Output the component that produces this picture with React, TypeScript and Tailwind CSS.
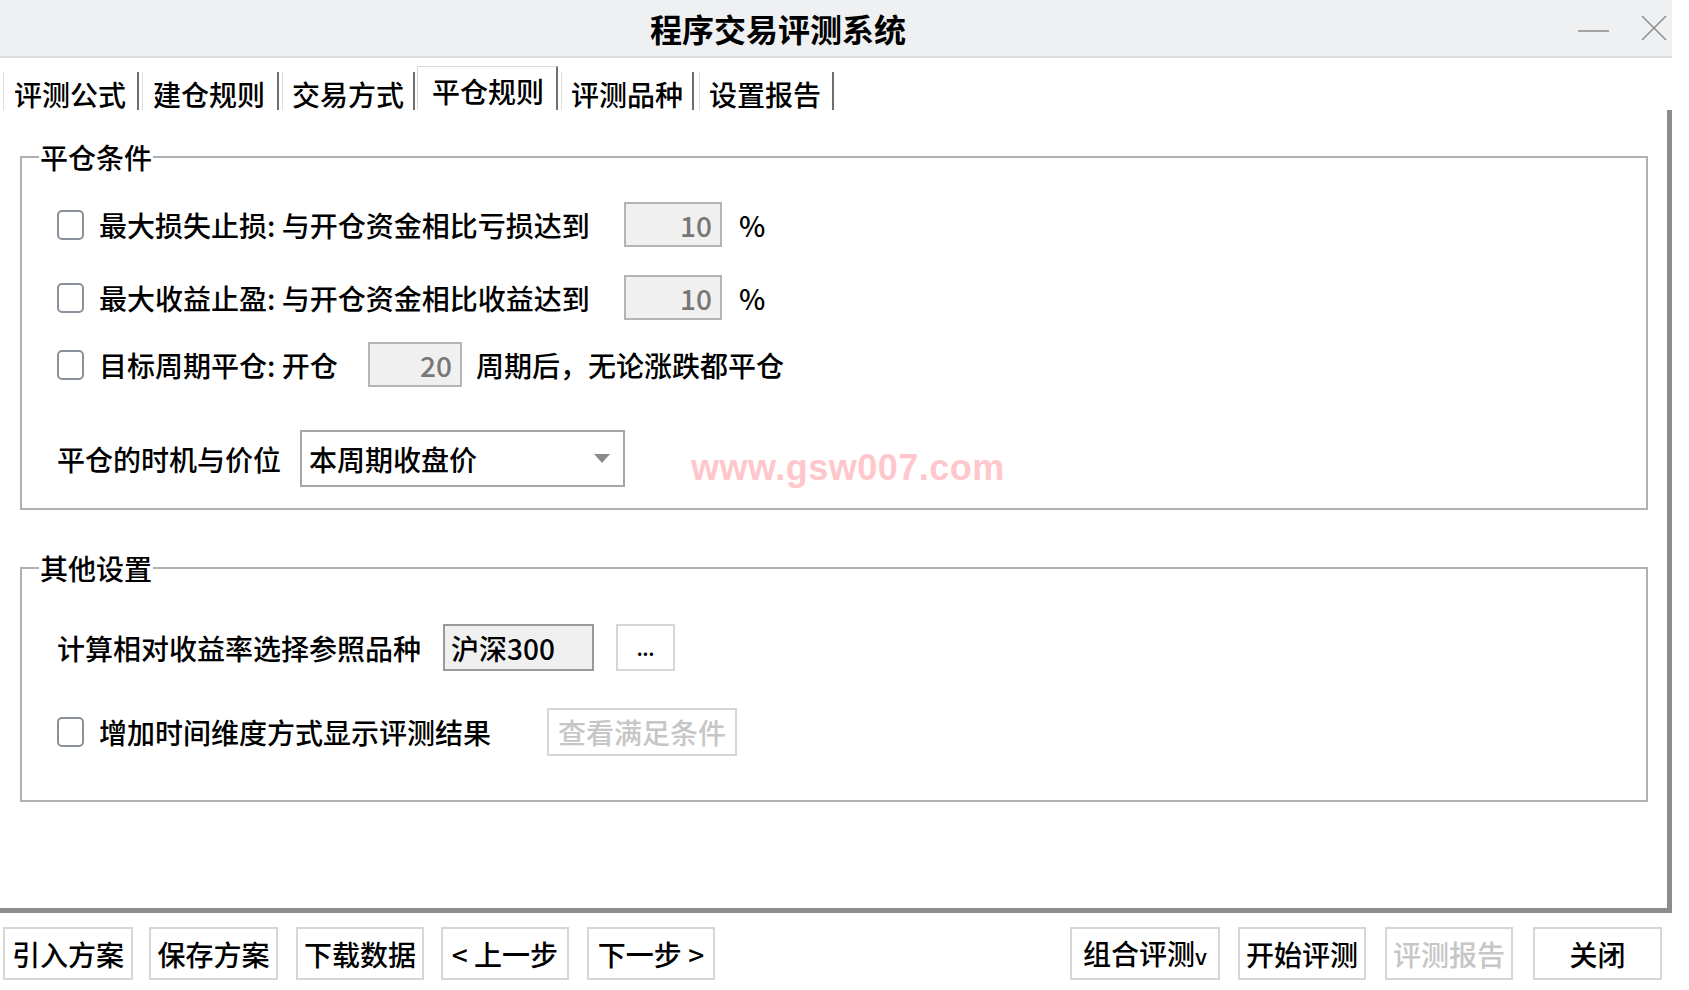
import React from "react";

const Check = () => (
  <span className="w-[27px] h-[30px] rounded-[5px] border-2 border-[#8a9099] bg-white shrink-0 inline-block" />
);

const Tab = ({ label, active, w, ml, pl }: { label: string; active?: boolean; w: number; ml: number; pl: number }) => (
  <div
    className={
      active
        ? "h-[44px] bg-white border-t border-l border-[#d8d8d8] border-r-2 border-r-[#707070] flex items-start pt-[7px]"
        : "h-[38px] bg-white border-l border-[#dedede] border-r-2 border-r-[#6e6e6e] flex items-start pt-[5px]"
    }
    style={{ width: w, marginLeft: ml, paddingLeft: pl }}
  >
    <span className="text-[28px] leading-[34px] text-black whitespace-nowrap">{label}</span>
  </div>
);

const Btn = ({ label, w, disabled, ml }: { label: React.ReactNode; w: number; disabled?: boolean; ml: number }) => (
  <div
    className={
      "h-[53px] border-2 border-[#d6d6d6] bg-white flex items-center justify-center text-[28px] leading-[34px] whitespace-nowrap " +
      (disabled ? "text-[#c6c6c6]" : "text-black")
    }
    style={{ width: w, marginLeft: ml }}
  >
    {label}
  </div>
);

const NumBox = ({ v, w }: { v: string; w: number }) => (
  <div
    className="h-[45px] bg-[#f0f0f0] border-2 border-[#b4b4b4] flex items-center justify-end pr-[8px] text-[28px] leading-[34px] text-[#777777] shrink-0"
    style={{ width: w }}
  >
    {v}
  </div>
);

export default function App() {
  return (
    <div className="w-[1689px] h-[990px] bg-white overflow-hidden font-['Noto_Sans_CJK_SC','Noto_Sans',sans-serif] font-medium text-black">
      {/* title bar */}
      <div className="h-[58px] w-[1672px] bg-[#eff0f2] border-b-2 border-[#dcdddf] flex items-center">
        <div className="ml-[650px] text-[32px] font-bold leading-[40px]">程序交易评测系统</div>
        <div className="ml-auto flex items-center mr-[5px]">
          <svg width="31" height="4" viewBox="0 0 31 4" className="translate-y-[3px]">
            <line x1="0" y1="2" x2="31" y2="2" stroke="#8a8a8a" strokeWidth="1.5" />
          </svg>
          <svg width="26" height="26" viewBox="0 0 26 26" className="ml-[32px]">
            <line x1="1" y1="1" x2="25" y2="25" stroke="#8a8a8a" strokeWidth="1.4" />
            <line x1="25" y1="1" x2="1" y2="25" stroke="#8a8a8a" strokeWidth="1.4" />
          </svg>
        </div>
      </div>

      {/* tabs */}
      <div className="h-[52px] w-[1672px] flex items-end">
        <Tab label="评测公式" w={136} ml={3} pl={10} />
        <Tab label="建仓规则" w={137} ml={3} pl={10} />
        <Tab label="交易方式" w={133} ml={3} pl={9} />
        <Tab label="平仓规则" active w={141} ml={2} pl={14} />
        <Tab label="评测品种" w={133} ml={3} pl={9} />
        <Tab label="设置报告" w={135} ml={5} pl={9} />
      </div>

      {/* panel */}
      <div className="h-[803px] w-[1672px] border-r-[5px] border-b-[5px] border-[#8c8c8c] pt-[31px]">
        <fieldset className="ml-[20px] w-[1628px] border-2 border-[#b0b0b0] p-0">
          <legend className="ml-[17px] px-[1px] text-[28px] leading-[32px]">平仓条件</legend>
          <div className="pl-[35px] pb-[21px] text-[28px] leading-[34px]">
            <div className="mt-[29px] h-[45px] flex items-center">
              <div className="w-[567px] flex items-center">
                <Check />
                <span className="ml-[15px] whitespace-nowrap">最大损失止损: 与开仓资金相比亏损达到</span>
              </div>
              <NumBox v="10" w={98} />
              <span className="ml-[17px]">%</span>
            </div>
            <div className="mt-[28px] h-[45px] flex items-center">
              <div className="w-[567px] flex items-center">
                <Check />
                <span className="ml-[15px] whitespace-nowrap">最大收益止盈: 与开仓资金相比收益达到</span>
              </div>
              <NumBox v="10" w={98} />
              <span className="ml-[17px]">%</span>
            </div>
            <div className="mt-[22px] h-[45px] flex items-center">
              <div className="w-[311px] flex items-center">
                <Check />
                <span className="ml-[15px] whitespace-nowrap">目标周期平仓: 开仓</span>
              </div>
              <NumBox v="20" w={94} />
              <span className="ml-[14px] whitespace-nowrap">周期后，无论涨跌都平仓</span>
            </div>
            <div className="mt-[43px] h-[57px] flex items-center">
              <span className="w-[243px] whitespace-nowrap">平仓的时机与价位</span>
              <div className="w-[325px] h-[57px] border-2 border-[#a6a6a6] bg-white flex items-center pl-[7px] pr-[13px]">
                <span className="whitespace-nowrap">本周期收盘价</span>
                <svg className="ml-auto" width="16" height="9" viewBox="0 0 16 9">
                  <path d="M0 0 L16 0 L8 9 Z" fill="#8a8a8a" />
                </svg>
              </div>
              <span className="ml-[66px] translate-y-[9px] font-['Liberation_Sans',sans-serif] font-bold text-[36px] tracking-[0.5px] leading-[40px] text-[#ffc7cb] whitespace-nowrap">
                www.gsw007.com
              </span>
            </div>
          </div>
        </fieldset>

        <fieldset className="ml-[20px] w-[1628px] mt-[42px] border-2 border-[#b0b0b0] p-0">
          <legend className="ml-[17px] px-[1px] text-[28px] leading-[32px]">其他设置</legend>
          <div className="pl-[35px] pb-[44px] text-[28px] leading-[34px]">
            <div className="mt-[40px] h-[47px] flex items-center">
              <span className="w-[386px] whitespace-nowrap">计算相对收益率选择参照品种</span>
              <div className="w-[151px] h-[47px] bg-[#f0f0f0] border-2 border-[#9a9a9a] flex items-center pl-[6px] whitespace-nowrap">
                沪深300
              </div>
              <div className="ml-[22px] w-[59px] h-[47px] border-2 border-[#d6d6d6] bg-white flex items-center justify-center text-[18px] font-bold leading-none">
                ...
              </div>
            </div>
            <div className="mt-[37px] h-[48px] flex items-center">
              <div className="w-[490px] flex items-center">
                <Check />
                <span className="ml-[15px] whitespace-nowrap">增加时间维度方式显示评测结果</span>
              </div>
              <div className="w-[190px] h-[48px] border-2 border-[#d6d6d6] bg-white flex items-center justify-center text-[#c6c6c6] whitespace-nowrap">
                查看满足条件
              </div>
            </div>
          </div>
        </fieldset>
      </div>

      {/* bottom buttons */}
      <div className="h-[77px] w-[1689px] flex items-start pt-[14px]">
        <Btn label="引入方案" w={130} ml={3} />
        <Btn label="保存方案" w={129} ml={16} />
        <Btn label="下载数据" w={128} ml={18} />
        <Btn label="< 上一步" w={128} ml={17} />
        <Btn label="下一步 >" w={128} ml={18} />
        <Btn label={<span>组合评测<span className="text-[22px]">v</span></span>} w={150} ml={355} />
        <Btn label="开始评测" w={128} ml={18} />
        <Btn label="评测报告" w={128} ml={19} disabled />
        <Btn label="关闭" w={129} ml={20} />
      </div>
    </div>
  );
}
